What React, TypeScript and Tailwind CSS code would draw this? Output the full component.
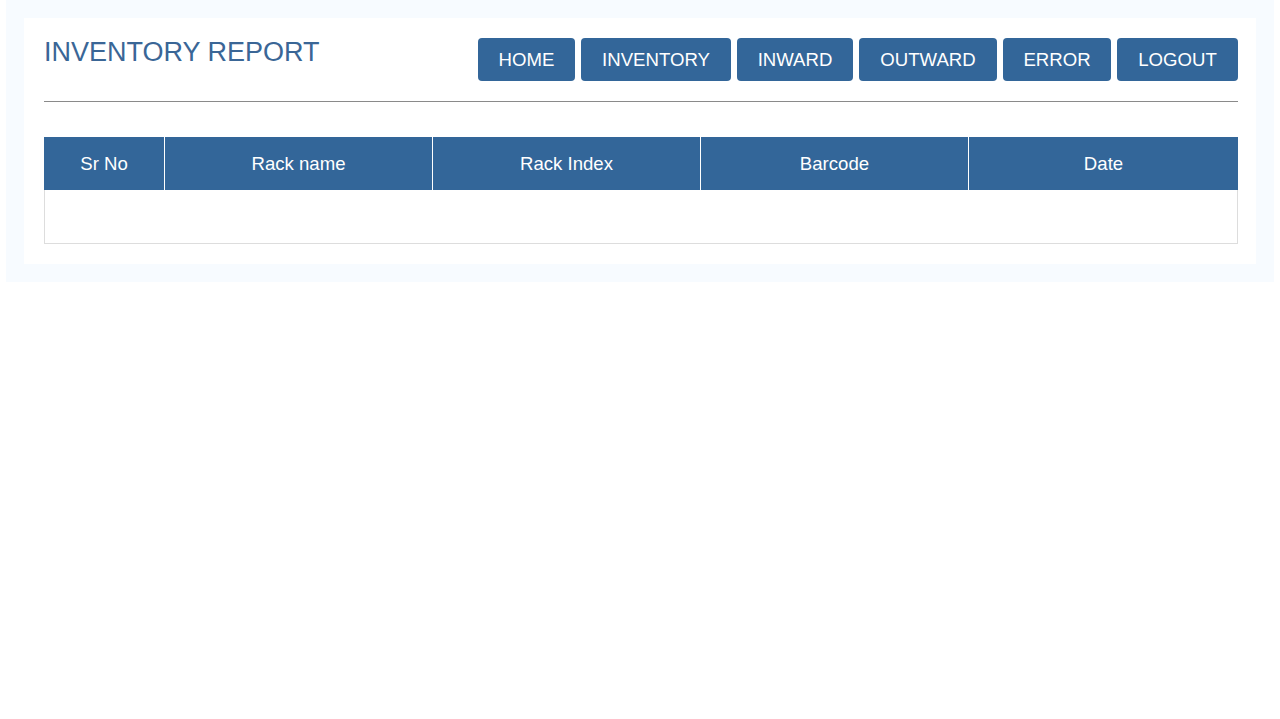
const navItems = [
  { label: "HOME", width: "w-[97px]" },
  { label: "INVENTORY", width: "w-[150px]" },
  { label: "INWARD", width: "w-[116px]" },
  { label: "OUTWARD", width: "w-[138px]" },
  { label: "ERROR", width: "w-[108px]" },
  { label: "LOGOUT", width: "w-[121px]" },
];
const columns = [
  { label: "Sr No", width: "w-[121px]" },
  { label: "Rack name", width: "w-[268px]" },
  { label: "Rack Index", width: "w-[268px]" },
  { label: "Barcode", width: "w-[268px]" },
  { label: "Date", width: "" },
];

export default function App() {
  return (
    <div className="min-h-screen bg-white font-['Liberation_Sans',Arial,sans-serif]">
      <div className="mx-[6px] bg-[#f7fbff] p-[18px]">
        <div className="bg-white pb-[20px] pl-[20px] pr-[18px] pt-[20px]">
          <div className="flex items-start justify-between">
            <h1 className="text-[27px] leading-[28px] text-[#3a6696]">
              INVENTORY REPORT
            </h1>
            <div className="flex gap-[6px]">
              {navItems.map((item) => (
                <button
                  key={item.label}
                  className={`${item.width} h-[43px] rounded-[4px] bg-[#336699] text-[18.6px] text-white`}
                >
                  {item.label}
                </button>
              ))}
            </div>
          </div>
          <div className="mt-[20px] border-b border-[#8a8a8a]"></div>

          <div className="mt-[35px]">
            <div className="flex h-[53px] bg-[#336699] text-[18.6px] text-white">
              {columns.map((col, i) => (
                <div
                  key={col.label}
                  className={`${col.width || "flex-1"} flex items-center justify-center ${
                    i < columns.length - 1 ? "border-r border-white" : ""
                  }`}
                >
                  {col.label}
                </div>
              ))}
            </div>
            <div className="h-[54px] border-x border-b border-[#dddddd]"></div>
          </div>
        </div>
      </div>
    </div>
  );
}
